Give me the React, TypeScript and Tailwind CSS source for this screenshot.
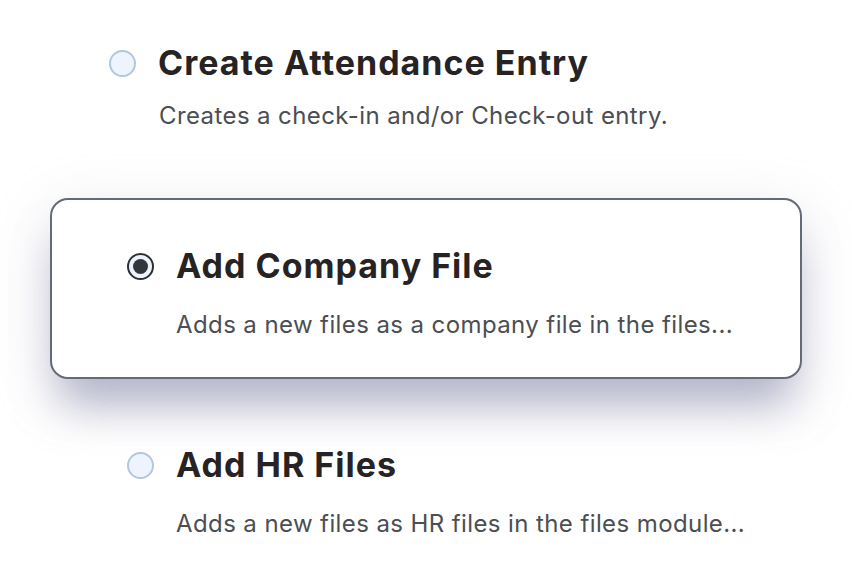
import React from "react";

type Option = {
  id: string;
  title: string;
  description: string;
};

const OPTIONS: Option[] = [
  {
    id: "attendance",
    title: "Create Attendance Entry",
    description: "Creates a check-in and/or Check-out entry.",
  },
  {
    id: "company-file",
    title: "Add Company File",
    description: "Adds a new files as a company file in the files...",
  },
  {
    id: "hr-files",
    title: "Add HR Files",
    description: "Adds a new files as HR files in the files module...",
  },
];

function Radio({ checked }: { checked: boolean }) {
  if (checked) {
    return (
      <span className="flex h-[27px] w-[27px] shrink-0 items-center justify-center rounded-full border-2 border-[#2b2f35] bg-[#eef3fb]">
        <span className="h-[15px] w-[15px] rounded-full bg-[#33373d]" />
      </span>
    );
  }
  return (
    <span className="h-[27px] w-[27px] shrink-0 rounded-full border-2 border-[#b3c6dd] bg-[#eef4fd]" />
  );
}

export default function App() {
  const selected = "company-file";

  return (
    <div
      className="h-[579px] w-[852px] overflow-hidden bg-white"
      style={{ fontFamily: "Inter, 'Noto Sans', sans-serif" }}
    >
      {/* first option, not selected */}
      <div className="pl-[109px] pt-[43px]">
        <div className="flex items-center gap-[22px]">
          <Radio checked={false} />
          <h2 className="text-[34px] font-bold leading-[40px] tracking-[1px] text-[#272324]">
            {OPTIONS[0].title}
          </h2>
        </div>
        <p className="mt-[18px] pl-[50px] text-[24px] leading-[30px] tracking-[0.4px] text-[#4b4e53]">
          {OPTIONS[0].description}
        </p>
      </div>

      {/* selected option card */}
      <div className="ml-[50px] mt-[67px] w-[752px] rounded-[18px] border-2 border-[#646b75] bg-white pb-[37px] pl-[75px] pt-[46px] shadow-[0_36px_44px_-10px_rgba(140,142,172,0.6),0_14px_56px_rgba(175,177,200,0.3)]">
        <div className="flex items-center gap-[22px]">
          <Radio checked={selected === OPTIONS[1].id} />
          <h2 className="text-[34px] font-bold leading-[40px] tracking-[1px] text-[#272324]">
            {OPTIONS[1].title}
          </h2>
        </div>
        <p className="mt-[24px] pl-[49px] text-[24px] leading-[30px] tracking-[0.4px] text-[#4b4e53]">
          {OPTIONS[1].description}
        </p>
      </div>

      {/* third option */}
      <div className="pl-[127px] pt-[66px]">
        <div className="flex items-center gap-[22px]">
          <Radio checked={selected === OPTIONS[2].id} />
          <h2 className="text-[34px] font-bold leading-[40px] tracking-[1px] text-[#272324]">
            {OPTIONS[2].title}
          </h2>
        </div>
        <p className="mt-[24px] pl-[49px] text-[24px] leading-[30px] tracking-[0.4px] text-[#4b4e53]">
          {OPTIONS[2].description}
        </p>
      </div>
    </div>
  );
}
